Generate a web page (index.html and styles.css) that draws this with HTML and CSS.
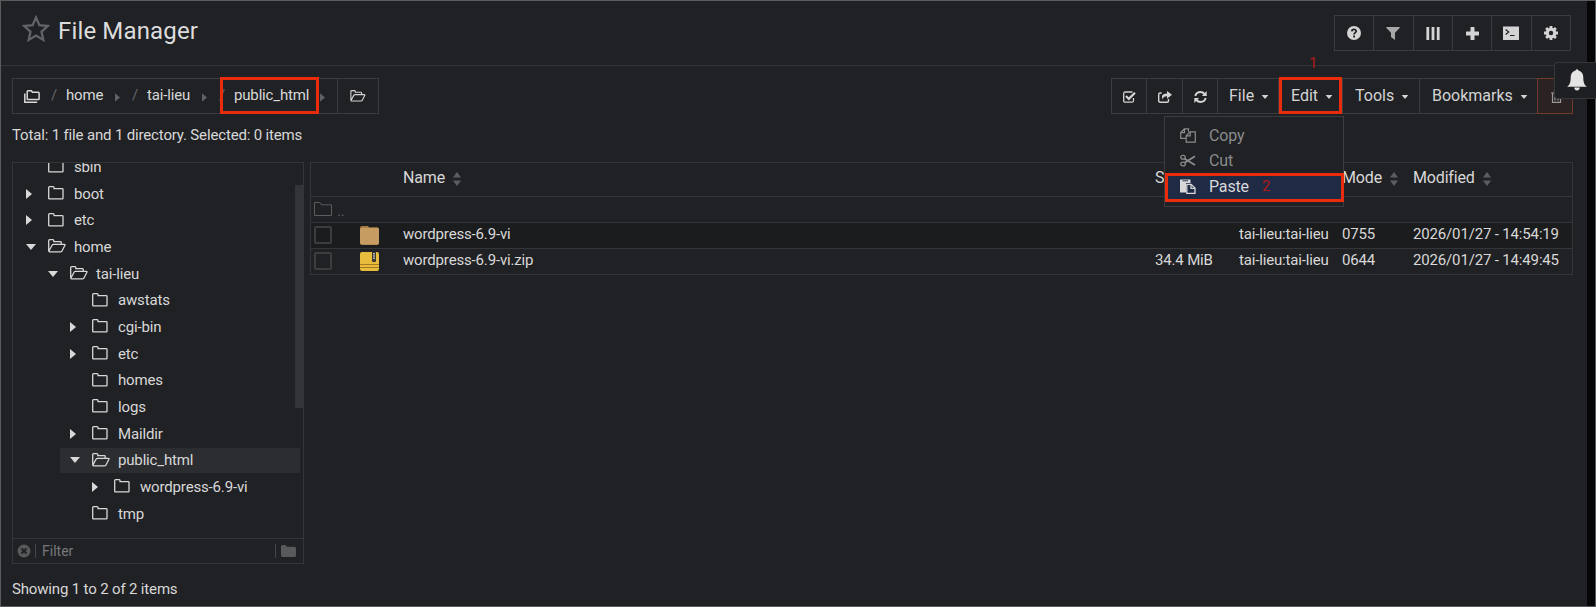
FILE: index.html
```
<!DOCTYPE html>
<html lang="en">
<head>
    <meta charset="UTF-8">
    <meta name="viewport" content="width=device-width, initial-scale=1.0">
    <title>File Manager</title>
    <link rel="stylesheet" href="styles.css">
</head>
<body>
    <!-- icon sprite -->
    <svg width="0" height="0" class="sprite">
        <symbol id="folder" viewBox="0 0 16 14"><path d="M.7 12.2V1.6Q.7.7 1.6.7h3.5q.9 0 .9.9v1.1h8.3q.7 0 .7.7v8.8q0 .7-.7.7H1.5q-.8 0-.8-.7z" fill="none" stroke="currentColor" stroke-width="1.3"/></symbol>
        <symbol id="folder-open" viewBox="0 0 18 14"><path d="M.7 12V1.6Q.7.7 1.6.7h3.3q.9 0 .9.9v1.1h6.6q.8 0 .8.8v1.9M.8 12.3 4.2 6q.4-.6 1.1-.6h11.1q1 0 .5.8L14 12q-.4.8-1.2.8H1.4q-.7 0-.6-.6z" fill="none" stroke="currentColor" stroke-width="1.3"/></symbol>
        <symbol id="right" viewBox="0 0 6 10"><path d="M0 0l6 5-6 5z" fill="currentColor"/></symbol>
        <symbol id="down" viewBox="0 0 10 6"><path d="M0 0h10L5 6z" fill="currentColor"/></symbol>
        <symbol id="sort" viewBox="0 0 8 14"><path d="M4 0l4 5.5H0zM4 14l4-5.5H0z" fill="currentColor"/></symbol>
    </svg>

    <div class="page">
        <header class="header">
            <svg class="star" viewBox="0 0 28 27"><path d="M14 2.500l3.400 7.700 8.400.8-6.300 5.600 1.800 8.300L14 20.600l-7.300 4.300 1.800-8.300L2.200 11l8.400-.8z" fill="none" stroke="currentColor" stroke-width="2.300"/></svg>
            <h1>File Manager</h1>
            <div class="group actions">
                <button class="btn"><svg width="14" height="14" viewBox="0 0 14 14"><circle cx="7" cy="7" r="7" fill="currentColor"/><path d="M4.8 5.4C4.9 2.8 9.2 2.9 9.2 5.2 9.2 6.7 7.1 6.6 7.1 8.5M7.1 9.6v1.8" fill="none" stroke="#202124" stroke-width="1.8"/></svg></button>
                <button class="btn dim"><svg width="14" height="13" viewBox="0 0 14 13"><path d="M.5 0h13q.6.5.1 1.1L9 5.7V13L5 10V5.7L.4 1.1Q-.1.5.5 0z" fill="currentColor"/></svg></button>
                <button class="btn"><svg width="14" height="13" viewBox="0 0 14 13"><path d="M.4 0h2.8v13H.4zM5.6 0h2.8v13H5.6zM10.8 0h2.8v13h-2.8z" fill="currentColor"/></svg></button>
                <button class="btn"><svg width="13" height="13" viewBox="0 0 13 13"><path d="M5 0h3q.5 0 .5.5v4h4q.5 0 .5.5v3q0 .5-.5.5h-4v4q0 .5-.5.5H5q-.5 0-.5-.5v-4h-4Q0 8.500 0 8V5q0-.5.5-.5h4v-4Q4.500 0 5 0z" fill="currentColor"/></svg></button>
                <button class="btn"><svg width="16" height="14" viewBox="0 0 16 14"><path d="M0 .5h16V14H0z" fill="currentColor"/><path d="M2.700 3.500 5.700 6 2.700 8.500M7 9.500h4.500" fill="none" stroke="#202124" stroke-width="1.200"/></svg></button>
                <button class="btn"><svg width="14" height="14" viewBox="0 0 14 14"><circle cx="7" cy="7" r="3.800" fill="none" stroke="currentColor" stroke-width="3.200"/><path d="M7 0v3M7 11v3M0 7h3M11 7h3M2.100 2.100l2 2M9.900 9.900l2 2M2.100 11.900l2-2M9.900 4.100l2-2" stroke="currentColor" stroke-width="2.800"/></svg></button>
            </div>
        </header>

        <div class="toolbar">
            <nav class="group crumbs">
                <div class="path">
                    <svg class="root" width="16" height="13" viewBox="0 0 16 13"><path d="M3.200 8.700V1.600q0-.8.8-.8h3.400l1 1.400h5.900q.8 0 .8.800v5.700q0 .8-.8.800H4q-.8 0-.8-.8z" fill="none" stroke="currentColor" stroke-width="1.500"/><path d="M.8 3.500v8.700h12.400" fill="none" stroke="currentColor" stroke-width="1.500"/></svg>
                    <span class="slash">/</span><a>home</a><svg class="arrow"><use href="#right"/></svg>
                    <span class="slash">/</span><a>tai-lieu</a><svg class="arrow"><use href="#right"/></svg>
                    <span class="slash">/</span><a class="current">public_html<i class="mark"></i></a><svg class="arrow"><use href="#right"/></svg>
                </div>
                <button class="btn open"><svg width="16" height="12"><use href="#folder-open"/></svg></button>
            </nav>

            <div class="group tools">
                <button class="btn"><svg width="13" height="12" viewBox="0 0 13 12"><path d="M10.500 7v2.700q0 1.500-1.500 1.500H2.200Q.7 11.200.7 9.700V2.500Q.7 1 2.200 1h7.300" fill="none" stroke="currentColor" stroke-width="1.300"/><path d="M3 5l2.800 2.900L12 1.800" fill="none" stroke="currentColor" stroke-width="2.200"/></svg></button>
                <button class="btn"><svg width="14" height="12" viewBox="0 0 14 12"><path d="M10.500 8v1.700q0 1.500-1.500 1.500H2.200Q.7 11.200.7 9.700V3.500Q.7 2 2.200 2h1.500" fill="none" stroke="currentColor" stroke-width="1.400"/><path d="M9 0l5 3.800-5 3.900V5.200Q5.200 5 4.800 8.500 1.700 2.800 9 2.400z" fill="currentColor"/></svg></button>
                <button class="btn"><svg width="13" height="12" viewBox="0 0 13 12"><path d="M1.300 5Q2.400 1.100 6.500 1.100q2.400 0 4 1.900M11.700 7q-1.100 3.900-5.200 3.900-2.400 0-4-1.900" fill="none" stroke="currentColor" stroke-width="2"/><path d="M12.700 0v5H7.900zM.3 12V7h4.800z" fill="currentColor"/></svg></button>
                <button class="btn menu file">File<svg class="caret"><use href="#down"/></svg></button>
                <div class="edit">
                    <button class="btn menu">Edit<svg class="caret"><use href="#down"/></svg></button>
                    <i class="mark"></i>
                    <span class="step one">1</span>
                    <ul class="dropdown">
                        <li><svg viewBox="0 0 16 15"><path d="M6.200 10.300H.7V4.500L4.300.8h4.200v3M4.500.8v3.900H.7M6.200 7.700 10 3.800h5.300v10.400H6.200zM10.200 3.800v4h-4" fill="none" stroke="currentColor" stroke-width="1.200"/></svg>Copy</li>
                        <li><svg viewBox="0 0 16 15"><path d="M4.600 5.700 15 12M4.600 9.700 15 3.300" fill="none" stroke="currentColor" stroke-width="1.800"/><ellipse cx="3" cy="4.300" rx="2.300" ry="1.900" fill="none" stroke="currentColor" stroke-width="1.300"/><ellipse cx="3" cy="11" rx="2.300" ry="1.900" fill="none" stroke="currentColor" stroke-width="1.300"/></svg>Cut</li>
                        <li class="active"><svg viewBox="0 0 16 15"><path d="M0 .5h10.500V4H6v9.500H0z" fill="currentColor"/><path d="M2.500 1.800h5.500" stroke="#1f2a45" stroke-width=".9"/><path d="M6.800 5.300h4.300l3.900 3.800v5.200H6.800z" fill="#1f2a45" stroke="currentColor" stroke-width="1.300"/><path d="M11 5.300v4h4" fill="none" stroke="currentColor" stroke-width="1.300"/></svg>Paste<span class="step two">2</span><i class="mark"></i></li>
                    </ul>
                </div>
                <button class="btn menu tool">Tools<svg class="caret"><use href="#down"/></svg></button>
                <button class="btn menu book">Bookmarks<svg class="caret"><use href="#down"/></svg></button>
                <button class="btn trash"><svg width="11" height="13" viewBox="0 0 11 13"><path d="M0 3h11M3.500 3V.7h4V3M1.500 3v9.300h8V3M4 5.500v5M7 5.500v5" fill="none" stroke="currentColor" stroke-width="1.200"/></svg></button>
            </div>
        </div>

        <p class="summary">Total: 1 file and 1 directory. Selected: 0 items</p>

        <main class="content">
            <aside class="sidebar">
                <ul class="tree">
                    <li class="l0"><span class="tw"></span><svg class="fi"><use href="#folder"/></svg>sbin</li>
                    <li class="l0"><span class="tw"><svg class="r"><use href="#right"/></svg></span><svg class="fi"><use href="#folder"/></svg>boot</li>
                    <li class="l0"><span class="tw"><svg class="r"><use href="#right"/></svg></span><svg class="fi"><use href="#folder"/></svg>etc</li>
                    <li class="l0"><span class="tw"><svg class="d"><use href="#down"/></svg></span><svg class="fi fo"><use href="#folder-open"/></svg>home</li>
                    <li class="l1"><span class="tw"><svg class="d"><use href="#down"/></svg></span><svg class="fi fo"><use href="#folder-open"/></svg>tai-lieu</li>
                    <li class="l2"><span class="tw"></span><svg class="fi"><use href="#folder"/></svg>awstats</li>
                    <li class="l2"><span class="tw"><svg class="r"><use href="#right"/></svg></span><svg class="fi"><use href="#folder"/></svg>cgi-bin</li>
                    <li class="l2"><span class="tw"><svg class="r"><use href="#right"/></svg></span><svg class="fi"><use href="#folder"/></svg>etc</li>
                    <li class="l2"><span class="tw"></span><svg class="fi"><use href="#folder"/></svg>homes</li>
                    <li class="l2"><span class="tw"></span><svg class="fi"><use href="#folder"/></svg>logs</li>
                    <li class="l2"><span class="tw"><svg class="r"><use href="#right"/></svg></span><svg class="fi"><use href="#folder"/></svg>Maildir</li>
                    <li class="l2 selected"><span class="tw"><svg class="d"><use href="#down"/></svg></span><svg class="fi fo"><use href="#folder-open"/></svg>public_html</li>
                    <li class="l3"><span class="tw"><svg class="r"><use href="#right"/></svg></span><svg class="fi"><use href="#folder"/></svg>wordpress-6.9-vi</li>
                    <li class="l2"><span class="tw"></span><svg class="fi"><use href="#folder"/></svg>tmp</li>
                </ul>
                <div class="thumb"></div>
                <div class="filter">
                    <svg width="14" height="14" viewBox="0 0 14 14"><circle cx="7" cy="7" r="6.500" fill="currentColor"/><path d="M4.500 4.500l5 5M9.500 4.500l-5 5" stroke="#202124" stroke-width="1.800"/></svg>
                    <span class="placeholder">Filter</span>
                    <svg class="solid" width="15" height="12" viewBox="0 0 15 12"><path d="M0 10.500v-9Q0 0 1.500 0H4q1.500 0 1.500 1.500v.3h8q1.500 0 1.500 1.500v7.200q0 1.500-1.500 1.500h-12Q0 12 0 10.500z" fill="currentColor"/></svg>
                </div>
            </aside>

            <section class="files">
                <div class="row head">
                    <span></span><span></span>
                    <span>Name<svg class="sort"><use href="#sort"/></svg></span>
                    <span>Size</span>
                    <span class="owner"></span>
                    <span>Mode<svg class="sort"><use href="#sort"/></svg></span>
                    <span>Modified<svg class="sort"><use href="#sort"/></svg></span>
                </div>
                <div class="row up"><span class="parent"><svg width="18" height="14" viewBox="0 0 18 14"><path d="M.5 13.500V.5h5.300l1.500 2.300h10.200v10.700z" fill="none" stroke="currentColor"/></svg>..</span></div>
                <div class="row dark">
                    <span class="check"></span>
                    <svg class="thumbnail" viewBox="0 0 19 19"><path d="M2 0h6l1 1.200h8q2 0 2 2V17q0 2-2 2H2q-2 0-2-2V2q0-2 2-2z" fill="#a67d47"/><rect y="2" width="19" height="16.500" rx="2" fill="#c79c62"/></svg>
                    <span>wordpress-6.9-vi</span>
                    <span></span>
                    <span class="owner">tai-lieu:tai-lieu</span>
                    <span>0755</span>
                    <span>2026/01/27 - 14:54:19</span>
                </div>
                <div class="row">
                    <span class="check"></span>
                    <svg class="thumbnail" viewBox="0 0 19 19"><rect width="19" height="19" rx="2" fill="#e8bd3e"/><path d="M0 12.500h19M0 15.500h19" stroke="#a8781c"/><path d="M12 0h4v9q0 1-1 1h-2q-1 0-1-1z" fill="#39372f"/><path d="M14 1v6" stroke="#ddd" stroke-width="1.500" stroke-dasharray="1.500 .7"/></svg>
                    <span>wordpress-6.9-vi.zip</span>
                    <span>34.4 MiB</span>
                    <span class="owner">tai-lieu:tai-lieu</span>
                    <span>0644</span>
                    <span>2026/01/27 - 14:49:45</span>
                </div>
            </section>
        </main>

        <footer class="footer">Showing 1 to 2 of 2 items</footer>

        <div class="bell"><svg width="20" height="22" viewBox="0 0 20 22"><path d="M8.500 1.500Q10-.8 11.500 1.500 16.300 2.800 16.300 8.500c0 5 1.200 7.500 3.500 9.300H.2c2.300-1.800 3.500-4.300 3.500-9.300Q3.700 2.800 8.500 1.500zM7.200 18.500h5.600q-.3 3-2.800 3t-2.800-3z" fill="currentColor"/></svg></div>
    </div>
</body>
</html>
```
FILE: styles.css
```
* {
    box-sizing: border-box;
}
body {
    margin: 0;
    height: 607px;
    overflow: hidden;
    background-color: #060606;
    border: 1px solid #5a5b5d;
    font-family: Roboto, sans-serif;
    font-size: 15px;
    letter-spacing: -0.16px;
    white-space: nowrap;
    color: #d8d8d8;
}
.sprite {
    position: absolute;
}
.page {
    width: 1586px;
    height: 605px;
    background-color: #202124;
}
.header {
    display: flex;
    height: 65px;
    padding: 14px 16px 0 21px;
    border-bottom: 1px solid #343538;
}
.star {
    width: 28px;
    height: 27px;
    color: #626366;
}
h1 {
    margin: 2px 0 0 8px;
    font-size: 24px;
    line-height: 28px;
    font-weight: 400;
    letter-spacing: 0.15px;
    color: #dcdcdd;
}
.group {
    display: flex;
    height: 36px;
    border: 1px solid #3b3c3f;
}
.actions {
    margin-left: auto;
    width: 237px;
}
.actions .btn {
    flex: 1;
}
.btn {
    display: flex;
    align-items: center;
    justify-content: center;
    width: 35.5px;
    margin: 0;
    padding: 0;
    font-family: inherit;
    font-size: 16px;
    color: #d4d4d4;
    background: none;
    border: 0;
    border-right: 1px solid #3b3c3f;
}
.btn:last-child {
    border-right: 0;
}
.actions .dim {
    color: #a7a7a8;
}
.toolbar {
    display: flex;
    justify-content: space-between;
    padding: 12px 14px 0 11px;
}
.crumbs {
    width: 367px;
}
.path {
    display: flex;
    align-items: center;
    width: 325px;
    padding-left: 11px;
    border-right: 1px solid #3b3c3f;
}
.path .root {
    margin-top: 1px;
}
.path a {
    position: relative;
    width: 37px;
    line-height: 18px;
    margin-top: -2px;
}
.path a:nth-of-type(2) {
    width: 43px;
}
.path .current {
    width: 74px;
}
.slash {
    width: 5px;
    margin: -2px 10px 0 11px;
    color: #646568;
}
.arrow {
    width: 5px;
    height: 9px;
    margin: 2px 1px 0 12px;
    color: #606164;
}
.open {
    flex: 1;
}
.mark {
    position: absolute;
    border: 3px solid #e92d0c;
}
.current .mark {
    left: -14px;
    top: -9px;
    width: 99px;
    height: 37px;
}
.tools .btn svg {
    margin: 1px 0 0 2px;
}
.tools .btn.menu {
    justify-content: flex-start;
    padding: 0 0 2px 11px;
}
.tools .menu .caret {
    width: 8px;
    height: 4px;
    margin: 4px 0 0 7px;
}
.tools .file {
    width: 61px;
}
.edit {
    position: relative;
    display: flex;
}
.tools .edit .menu {
    width: 64px;
    padding-left: 12px;
    border-right: 1px solid #3b3c3f;
}
.edit > .mark {
    left: 0;
    top: -2px;
    width: 63px;
    height: 37px;
}
.step {
    position: absolute;
    font-size: 15px;
    line-height: 15px;
    color: #b01a1a;
}
.one {
    left: 30px;
    top: -23px;
}
.dropdown {
    position: absolute;
    z-index: 2;
    left: -115px;
    top: 37px;
    width: 180px;
    height: 91px;
    margin: 0;
    padding: 6px 0 0;
    list-style: none;
    font-size: 16px;
    color: #8a8b8d;
    background-color: #202124;
    border: 1px solid #3b3c3f;
}
.dropdown li {
    position: relative;
    display: flex;
    align-items: center;
    height: 25px;
    padding-left: 15px;
}
.dropdown svg {
    width: 16px;
    height: 15px;
    margin: 0 13px 0 0;
}
.dropdown .active {
    color: #d8d8d9;
    background-color: #1f2a45;
    height: 27px;
}
.active .mark {
    left: 0;
    top: 0;
    width: 179px;
    height: 29px;
}
.two {
    left: 97px;
    top: 6px;
}
.tools .btn.tool {
    width: 77px;
    padding-left: 12px;
}
.tools .btn.book {
    width: 118px;
    padding-left: 12px;
}
.tools .trash {
    width: 34px;
    color: #9a9a9b;
    background-color: #2b2224;
    outline: 1px solid #74392a;
}
.summary {
    margin: 11px 0 0 11px;
    line-height: 20px;
}
.content {
    display: flex;
    gap: 6px;
    margin: 17px 14px 0 11px;
}
.sidebar {
    position: relative;
    width: 292px;
    height: 402px;
    border: 1px solid #343538;
}
.tree {
    display: flex;
    flex-direction: column;
    justify-content: flex-end;
    height: 375px;
    margin: 0;
    padding: 0 3px 12px 0;
    list-style: none;
    overflow: hidden;
}
.tree li {
    display: flex;
    flex: none;
    align-items: center;
    height: 24.680px;
    margin-top: 2px;
    padding-left: 13px;
}
.tree .l1 {
    padding-left: 35px;
}
.tree .l2 {
    padding-left: 10px;
    margin-left: 47px;
}
.tree .l3 {
    padding-left: 79px;
}
.tree .selected {
    background-color: #2c2d30;
}
.tw {
    display: flex;
    width: 22px;
}
.r {
    width: 6px;
    height: 10px;
}
.d {
    width: 10px;
    height: 6px;
}
.fi {
    width: 16px;
    height: 14px;
    margin: -1px 10px 0 0;
}
.fo {
    width: 18px;
    margin-right: 8px;
}
.thumb {
    position: absolute;
    right: 0;
    top: 22px;
    width: 8px;
    height: 223px;
    background-color: #333437;
}
.filter {
    display: flex;
    align-items: center;
    height: 25px;
    padding: 0 7px 0 4px;
    border-top: 1px solid #343538;
    color: #58595b;
}
.placeholder {
    flex: 1;
    margin: 0 5px 0 4px;
    padding-left: 6px;
    line-height: 14px;
    font-size: 14px;
    letter-spacing: 0;
    color: #77787a;
    border-left: 1px solid #45464a;
    border-right: 1px solid #45464a;
}
.files {
    flex: 1;
    height: 113px;
    border: 1px solid #343538;
}
.row {
    display: grid;
    grid-template-columns: 45px 47px 752px 84px 91px 83px 1fr;
    align-items: center;
    height: 26px;
    border-bottom: 1px solid #343538;
}
.row > span {
    margin-top: -4px;
}
.row > :nth-child(6) {
    padding-left: 12px;
}
.row.head {
    height: 34px;
    font-size: 16px;
}
.sort {
    width: 8px;
    height: 14px;
    margin: 0 0 -3px 8px;
    color: #5c5d60;
}
.up {
    color: #5b5c5e;
}
.row .parent {
    display: flex;
    gap: 5px;
    margin-top: 2px;
    padding-left: 3px;
}
.dark {
    background-color: #1b1c1d;
}
.row .check {
    width: 18px;
    height: 18px;
    margin: -1px 0 0 3px;
    border: 2px solid #3c3d3f;
    border-radius: 2px;
}
.thumbnail {
    width: 19px;
    height: 19px;
    margin: -1px 0 0 4px;
}
.footer {
    margin: 15px 0 0 11px;
    line-height: 20px;
}
.bell {
    position: absolute;
    right: 0;
    top: 62px;
    display: flex;
    align-items: center;
    z-index: 3;
    width: 42px;
    height: 37px;
    padding: 0 0 2px 12px;
    background-color: #1e1f22;
    border: 1px solid #36373a;
    border-right: 0;
    border-radius: 4px 0 0 4px;
    color: #e4e4e4;
}
```
